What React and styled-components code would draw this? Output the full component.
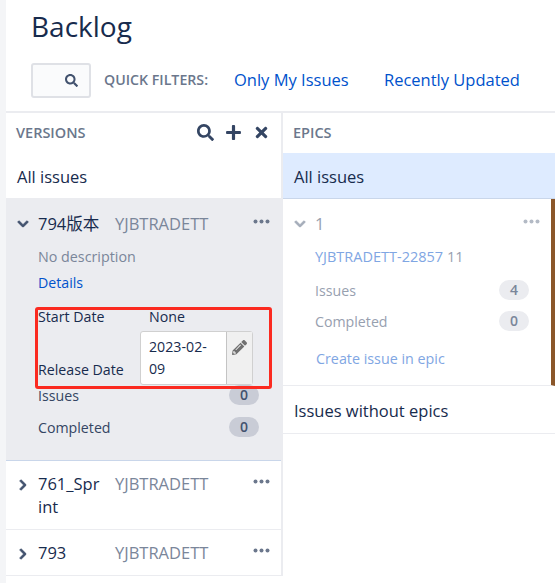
import React from 'react';
import styled, { createGlobalStyle } from 'styled-components';
import { FaSearch, FaPlus, FaTimes, FaPencilAlt, FaChevronDown, FaChevronRight } from 'react-icons/fa';

const GlobalStyle = createGlobalStyle`
  html, body { margin: 0; padding: 0; background: #fff; }
  body {
    font-family: "Open Sans", "Noto Sans CJK SC", sans-serif;
    font-size: 14.2px;
    color: #172b4d;
    overflow: hidden;
  }
`;

const Page = styled.div`
  position: relative;
  width: 555px;
  height: 583px;
  overflow: hidden;
  box-sizing: border-box;
  border-left: 6px solid #f4f5f7;
`;

const Header = styled.header`
  height: 113px;
  box-sizing: border-box;
  padding: 8px 0 0 25px;
  border-bottom: 2px solid #ebecf0;
`;

const Title = styled.h1`
  margin: 0;
  font-size: 28px;
  line-height: 36px;
  font-weight: 400;
  color: #172b4d;
`;

const FilterBar = styled.div`
  display: flex;
  align-items: center;
  margin-top: 19px;
  height: 35px;
`;

const SearchBox = styled.div`
  width: 60px;
  height: 35px;
  box-sizing: border-box;
  border: 2px solid #dfe1e6;
  border-radius: 3px;
  background: #fafbfc;
  display: flex;
  align-items: center;
  justify-content: flex-end;
  padding-right: 11px;
  color: #42526e;
  font-size: 13px;
`;

const FilterLabel = styled.span`
  margin-left: 13px;
  width: 130px;
  padding-bottom: 2px;
  font-size: 14.2px;
  font-weight: 600;
  color: #6b778c;
  white-space: nowrap;
`;

const FilterLink = styled.a`
  width: ${p => p.$w}px;
  padding-bottom: 2px;
  font-size: 16.5px;
  color: #0052cc;
  white-space: nowrap;
`;

const Columns = styled.div`
  display: flex;
`;

const VersionsCol = styled.section`
  width: 275px;
  flex: none;
  border-right: 2px solid #ebecf0;
`;

const EpicsCol = styled.section`
  flex: 1;
  min-width: 0;
`;

const PanelHead = styled.div`
  height: 40px;
  box-sizing: border-box;
  padding: 0 11px 2px 10px;
  display: flex;
  align-items: center;
  font-size: 14.5px;
  font-weight: 600;
  color: #6b778c;
`;

const PanelTools = styled.div`
  margin-left: auto;
  display: flex;
  align-items: center;
  gap: 11px;
  color: #344563;
  font-size: 17px;
`;

const AllRow = styled.div`
  height: 46px;
  box-sizing: border-box;
  display: flex;
  align-items: center;
  padding: 2px 11px 0;
  font-size: 16.5px;
  background: ${p => (p.$active ? '#deebff' : '#fff')};
  border-bottom: 1px solid ${p => (p.$active ? '#c9d6ea' : '#ebecf0')};
`;

const VersionCard = styled.div`
  box-sizing: border-box;
  padding: ${p => (p.$open ? '13px 22px 21px 32px' : '11px 22px 0 32px')};
  height: ${p => p.$h}px;
  background: ${p => (p.$open ? '#ebecf0' : '#fff')};
  border-bottom: 1px solid ${p => (p.$open ? '#c9d6ea' : '#ebecf0')};
  position: relative;
`;

const VersionTop = styled.div`
  display: grid;
  grid-template-columns: 77px 1fr 22px;
  align-items: start;
  line-height: 23px;
`;

const Caret = styled.span`
  position: absolute;
  left: 11px;
  top: ${p => p.$top}px;
  font-size: 12px;
  line-height: 1;
  color: #42526e;

  svg {
    stroke: currentColor;
    stroke-width: 40;
  }
`;

const VersionName = styled.div`
  font-size: 16.5px;
  padding-right: 12px;
  color: #172b4d;
  word-break: break-all;
`;

const ProjectKey = styled.div`
  font-size: 16.5px;
  color: #7a869a;
  white-space: nowrap;
`;

const Dots = styled.svg`
  width: 17px;
  height: 5px;
  margin: 7px -11px 0 0;
  justify-self: end;
  fill: ${p => p.$fill || '#6b778c'};
`;

const Muted = styled.div`
  margin-top: 12px;
  font-size: 14.3px;
  line-height: 20px;
  color: #7a869a;
`;

const SmallLink = styled.a`
  display: block;
  margin-top: 6px;
  font-size: 14.2px;
  line-height: 20px;
  color: #0052cc;
`;

const DateGrid = styled.div`
  margin-top: 14px;
  display: grid;
  grid-template-columns: 102px 113px;
  font-size: 14.2px;
  line-height: 20px;
`;

const DateValue = styled.div`
  padding-left: 9px;
`;

const ReleaseLabel = styled.div`
  align-self: end;
  padding-bottom: 5px;
  margin-top: 4px;
`;

const DateEditor = styled.div`
  margin-top: 4px;
  display: flex;
  height: 54px;
  box-sizing: border-box;
  border: 1px solid #d0d0d0;
  border-radius: 3px;
  background: #fff;
`;

const DateInput = styled.div`
  width: 85px;
  box-sizing: border-box;
  padding: 4px 8px;
  font-size: 14.2px;
  line-height: 22px;
`;

const EditButton = styled.div`
  flex: 1;
  background: #f0f0f0;
  border-left: 1px solid #c4c4c4;
  color: #707070;
  font-size: 15px;
  display: flex;
  justify-content: center;
  padding-top: 8px;
`;

const StatRow = styled.div`
  display: flex;
  justify-content: space-between;
  align-items: center;
  height: 20px;
  margin-top: ${p => p.$gap}px;
  font-size: 14.2px;
  color: ${p => p.$faded ? '#97a0af' : '#344563'};
`;

const Badge = styled.span`
  width: 30px;
  height: 20px;
  border-radius: 10px;
  background: ${p => (p.$faded ? '#ebecf0' : '#c9ccd6')};
  color: ${p => (p.$faded ? '#7a869a' : '#42526e')};
  font-weight: 600;
  font-size: 14px;
  text-align: center;
  line-height: 20px;
`;

const EpicCard = styled.div`
  position: relative;
  height: 187px;
  box-sizing: border-box;
  padding: 13px 22px 0 32px;
  border-right: 4px solid #8b572a;
  border-bottom: 1px solid #ebecf0;
`;

const EpicTop = styled.div`
  display: flex;
  justify-content: space-between;
  line-height: 23px;
  font-size: 16.5px;
  color: #97a0af;
`;

const EpicCaret = styled(Caret)`
  color: #a5adba;
`;

const EpicKey = styled.div`
  margin-top: 12px;
  font-size: 14.5px;
  line-height: 20px;
  color: #97a0af;
  white-space: nowrap;
`;

const KeyLink = styled.span`
  color: #7fa6e3;
`;

const CreateLink = styled.a`
  display: block;
  margin-top: 18px;
  margin-left: 1px;
  font-size: 14.3px;
  line-height: 20px;
  color: #7fa6e3;
`;

const PlainRow = styled.div`
  height: 48px;
  box-sizing: border-box;
  display: flex;
  align-items: center;
  padding: 2px 11px 0;
  font-size: 16.5px;
  border-bottom: 1px solid #ebecf0;
`;

// red annotation drawn on top of the screenshot
const Annotation = styled.div`
  position: absolute;
  left: 29px;
  top: 307px;
  width: 237px;
  height: 82px;
  box-sizing: border-box;
  border: 3px solid #fb2a20;
  border-radius: 3px;
  pointer-events: none;
`;

const MoreIcon = ({ fill }) => (
  <Dots viewBox="0 0 17 5" $fill={fill}>
    <circle cx="2.5" cy="2.5" r="2" />
    <circle cx="8.5" cy="2.5" r="2" />
    <circle cx="14.5" cy="2.5" r="2" />
  </Dots>
);

const CollapsedVersion = ({ name, h }) => (
  <VersionCard $h={h}>
    <Caret $top={18}><FaChevronRight /></Caret>
    <VersionTop>
      <VersionName>{name}</VersionName>
      <ProjectKey>YJBTRADETT</ProjectKey>
      <MoreIcon />
    </VersionTop>
  </VersionCard>
);

export default function App() {
  return (
    <Page>
      <GlobalStyle />
      <Header>
        <Title>Backlog</Title>
        <FilterBar>
          <SearchBox><FaSearch /></SearchBox>
          <FilterLabel>QUICK FILTERS:</FilterLabel>
          <FilterLink $w={150}>Only My Issues</FilterLink>
          <FilterLink $w={140}>Recently Updated</FilterLink>
        </FilterBar>
      </Header>
      <Columns>
        <VersionsCol>
          <PanelHead>
            VERSIONS
            <PanelTools>
              <FaSearch />
              <FaPlus />
              <FaTimes />
            </PanelTools>
          </PanelHead>
          <AllRow>All issues</AllRow>
          <VersionCard $open $h={262}>
            <Caret $top={19}><FaChevronDown /></Caret>
            <VersionTop>
              <VersionName>794版本</VersionName>
              <ProjectKey>YJBTRADETT</ProjectKey>
              <MoreIcon />
            </VersionTop>
            <Muted>No description</Muted>
            <SmallLink>Details</SmallLink>
            <DateGrid>
              <div>Start Date</div>
              <DateValue>None</DateValue>
              <ReleaseLabel>Release Date</ReleaseLabel>
              <DateEditor>
                <DateInput>2023-02-09</DateInput>
                <EditButton><FaPencilAlt /></EditButton>
              </DateEditor>
            </DateGrid>
            <StatRow $gap={0}>Issues<Badge>0</Badge></StatRow>
            <StatRow $gap={12}>Completed<Badge>0</Badge></StatRow>
          </VersionCard>
          <CollapsedVersion name="761_Sprint" h={69} />
          <CollapsedVersion name="793" h={46} />
        </VersionsCol>
        <EpicsCol>
          <PanelHead>EPICS</PanelHead>
          <AllRow $active>All issues</AllRow>
          <EpicCard>
            <EpicCaret $top={19}><FaChevronDown /></EpicCaret>
            <EpicTop>
              1
              <MoreIcon fill="#b3bac5" />
            </EpicTop>
            <EpicKey><KeyLink>YJBTRADETT-22857</KeyLink> 11</EpicKey>
            <StatRow $gap={13} $faded>Issues<Badge $faded>4</Badge></StatRow>
            <StatRow $gap={11} $faded>Completed<Badge $faded>0</Badge></StatRow>
            <CreateLink>Create issue in epic</CreateLink>
          </EpicCard>
          <PlainRow>Issues without epics</PlainRow>
        </EpicsCol>
      </Columns>
      <Annotation />
    </Page>
  );
}
